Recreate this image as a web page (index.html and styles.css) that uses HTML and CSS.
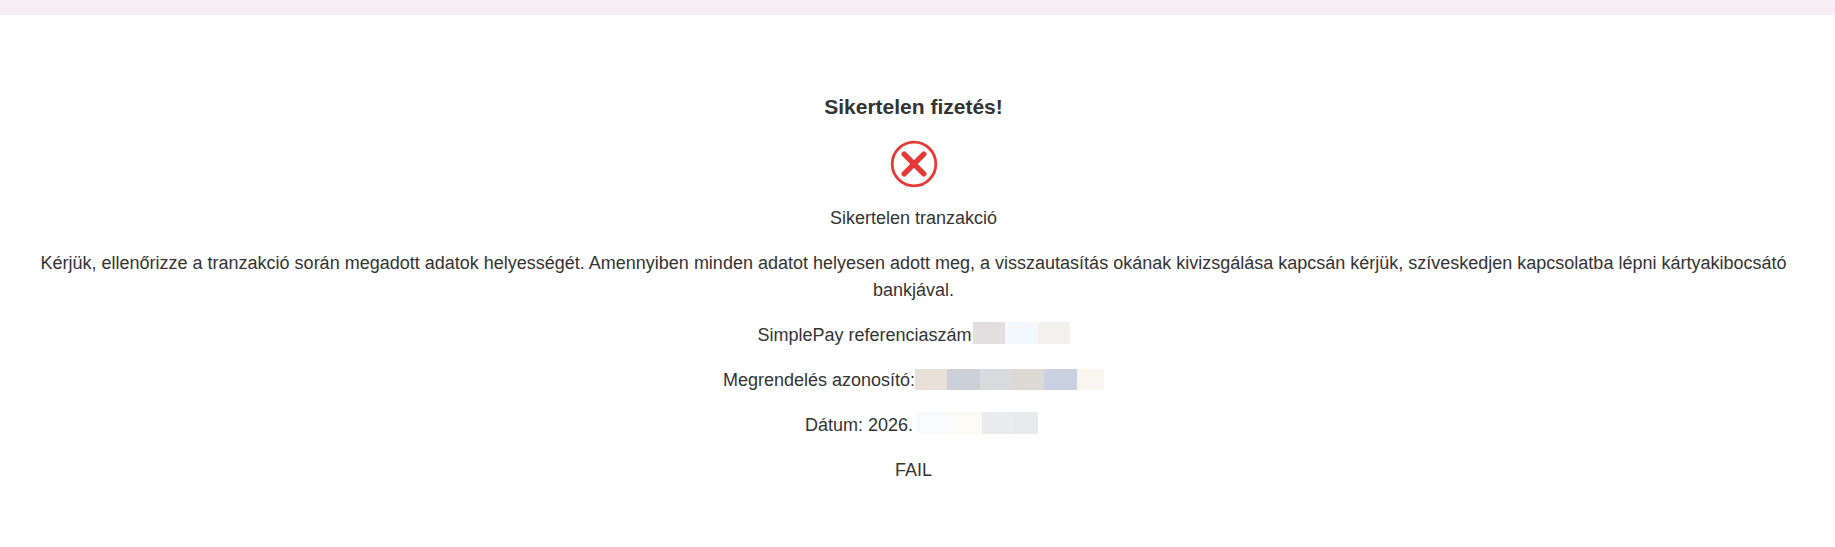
FILE: index.html
```html
<!DOCTYPE html>
<html lang="hu">
<head>
  <meta charset="UTF-8">
  <meta name="viewport" content="width=device-width, initial-scale=1">
  <title>Sikertelen fizetés</title>
  <link rel="stylesheet" href="styles.css">
</head>

<body>
  <header class="top-bar"></header>

  <main class="payment-result">
    <h1>Sikertelen fizetés!</h1>

    <svg class="fail-icon" viewBox="0 0 48 48" aria-hidden="true">
      <circle cx="24" cy="24" r="21.8" fill="none" stroke="#e53935" stroke-width="2.8"/>
      <path d="M14.2 14.2L33.8 33.8M33.8 14.2L14.2 33.8" fill="none" stroke="#e53935" stroke-width="5.4" stroke-linecap="round"/>
    </svg>

    <p>Sikertelen tranzakció</p>
    <p>Kérjük, ellenőrizze a tranzakció során megadott adatok helyességét. Amennyiben minden adatot helyesen adott meg, a visszautasítás okának kivizsgálása kapcsán kérjük, szíveskedjen kapcsolatba lépni kártyakibocsátó bankjával.</p>
    <p>SimplePay referenciaszám<span class="mask mask-reference"></span></p>
    <p>Megrendelés azonosító:<span class="mask mask-order"></span></p>
    <p>Dátum: 2026.<span class="mask mask-date"></span></p>
    <p>FAIL</p>
  </main>
</body>
</html>
```
FILE: styles.css
```css
* {
  box-sizing: border-box;
}

body {
  margin: 0;
  background-color: #fff;
  color: #333;
  font-family: Arial, "Liberation Sans", sans-serif;
  font-size: 18px;
  line-height: 27px;
}

.top-bar {
  height: 15px;
  background-color: #f6edf5;
}

.payment-result {
  padding: 78px 38px 45px 30px;
  text-align: center;
}

h1 {
  margin: 0 0 20px;
  font-size: 21px;
  line-height: 27px;
}

.fail-icon {
  display: block;
  width: 48px;
  height: 48px;
  margin: 0 auto 17px;
}

p {
  margin: 0 0 18px;
}

/* Hidden values, shown as coloured blocks */
.mask {
  display: inline-block;
  height: 22px;
  vertical-align: top;
}

.mask-reference {
  width: 97px;
  margin-left: 1px;
  background: linear-gradient(to right, #e3dfe1 32px, #f3f8ff 32px 65px, #f2f1ed 65px);
}

.mask-order {
  width: 189px;
  height: 21px;
  margin-top: 2px;
  background: linear-gradient(to right, #e8e0d7 32px, #cacfd8 32px 65px, #d9dade 65px 97px, #dcd9d3 97px 129px, #c9d1e0 129px 162px, #f9f5ef 162px);
}

.mask-date {
  width: 121px;
  margin-left: 4px;
  margin-right: -16px;
  background: linear-gradient(to right, #f8fafd 33px, #fbfaf5 33px 65px, #eaebef 65px 97px, #e8e9eb 97px);
}
```
